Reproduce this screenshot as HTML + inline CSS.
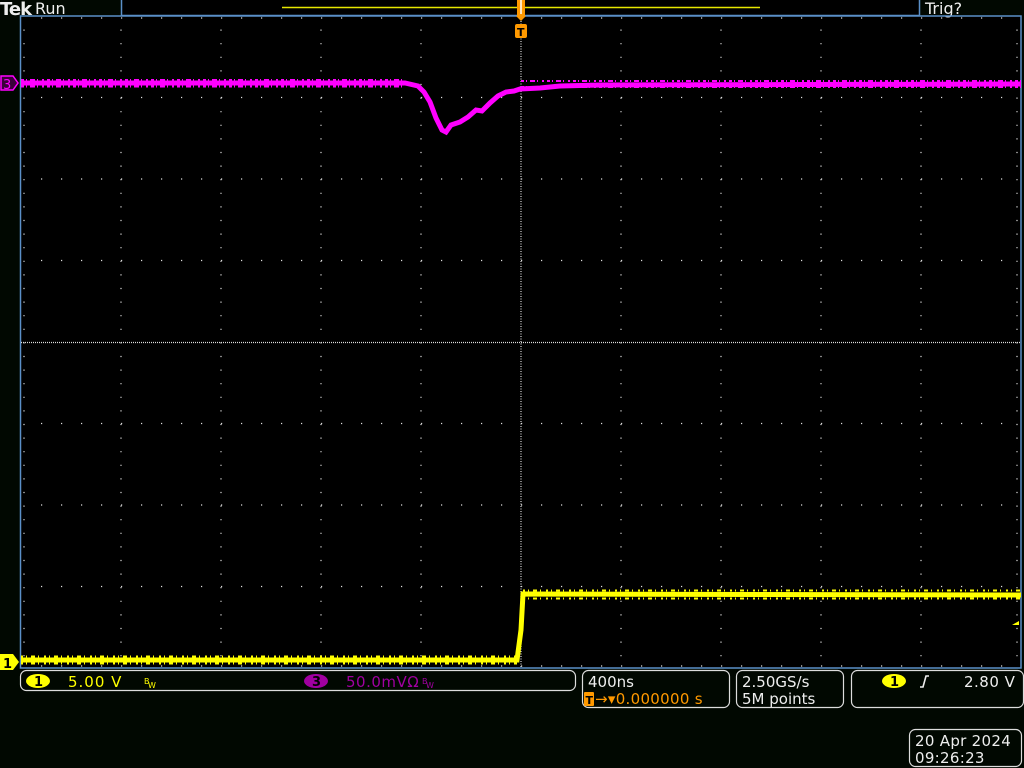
<!DOCTYPE html>
<html><head><meta charset="utf-8"><style>
html,body{margin:0;padding:0;background:#010801;width:1024px;height:768px;overflow:hidden}
svg{display:block}
text{font-family:"DejaVu Sans","Liberation Sans",sans-serif}
</style></head><body>
<svg width="1024" height="768" viewBox="0 0 1024 768" xmlns="http://www.w3.org/2000/svg">
<rect x="0" y="0" width="1024" height="768" fill="#010801"/>
<rect x="21" y="16" width="1000" height="652" fill="#000"/>
<rect x="121.5" y="-1" width="798" height="16.5" fill="#000" stroke="#5b8fc8" stroke-width="1.5"/>
<line x1="282" y1="7.5" x2="760" y2="7.5" stroke="#e6e600" stroke-width="1.5"/>
<text x="0" y="15" font-size="18" font-weight="bold" fill="#eee" font-family="Liberation Serif,serif" letter-spacing="-1">Tek</text>
<text x="35" y="14" font-size="16" fill="#eee">Run</text>
<text x="925" y="14" font-size="16" fill="#eee">Trig?</text>
<rect x="20.5" y="16" width="1000.5" height="652" fill="none" stroke="#5b8fc8" stroke-width="1.5"/>
<g stroke="#ddd" stroke-width="1.2" fill="none">
 <g stroke-dasharray="1.2 12.4">
  <line x1="121" y1="29.5" x2="121" y2="668"/><line x1="221" y1="29.5" x2="221" y2="668"/>
  <line x1="321" y1="29.5" x2="321" y2="668"/><line x1="421" y1="29.5" x2="421" y2="668"/>
  <line x1="621" y1="29.5" x2="621" y2="668"/><line x1="721" y1="29.5" x2="721" y2="668"/>
  <line x1="821" y1="29.5" x2="821" y2="668"/><line x1="921" y1="29.5" x2="921" y2="668"/>
 </g>
 <g stroke-dasharray="1.2 18.8">
  <line x1="41" y1="97.5" x2="1021" y2="97.5"/><line x1="41" y1="179" x2="1021" y2="179"/>
  <line x1="41" y1="260.5" x2="1021" y2="260.5"/><line x1="41" y1="423.5" x2="1021" y2="423.5"/>
  <line x1="41" y1="505" x2="1021" y2="505"/><line x1="41" y1="586.5" x2="1021" y2="586.5"/>
  <line x1="41" y1="18" x2="1021" y2="18"/><line x1="41" y1="666" x2="1021" y2="666"/>
 </g>
 <line x1="21" y1="342.5" x2="1021" y2="342.5" stroke-dasharray="1 1"/>
 <line x1="521" y1="16" x2="521" y2="668" stroke-dasharray="1 1.5"/>
 <g stroke-dasharray="1.2 12.4">
  <line x1="24" y1="29.5" x2="24" y2="668"/><line x1="1017" y1="29.5" x2="1017" y2="668"/>
 </g>
</g>
<!-- magenta trace -->
<path d="M21 83 L405 83 L418 86 L424 92 L430 102 L436 118 L442 130 L446 132 L451 125 L460 122 L468 117 L476 110 L482 111 L490 103 L498 96 L506 92 L514 91 L520 89 L540 88 L560 86 L600 85 L1021 84" fill="none" stroke="#ff00ff" stroke-width="5"/>
<path d="M21 80 h385 M521 81 h500 M21 86.5 h385 M521 87 h500" fill="none" stroke="#ff00ff" stroke-width="2" stroke-dasharray="3 2 1 3 5 2 1 4 2 3"/>
<!-- yellow trace -->
<path d="M21 660 L517 660 L521 630 L523 594 L1021 595" fill="none" stroke="#ffff00" stroke-width="5"/>
<path d="M21 656.5 h496 M21 663.5 h496 M523 590.5 h498 M523 598.5 h498" fill="none" stroke="#ffff00" stroke-width="2" stroke-dasharray="2 3 1 4 4 3 1 5"/>
<path d="M1 76 h12 l5 7 l-5 7 h-12 z" fill="#3a003a" stroke="#ff00ff" stroke-width="1.5"/>
<text x="3" y="89" font-size="13" fill="#ff00ff">3</text>
<path d="M0 654 h13 l6 8 l-6 8 h-13 z" fill="#ffff00"/>
<text x="3" y="668" font-size="13" font-weight="bold" fill="#000">1</text>
<path d="M1019 625 l-7 0 l7 -4 z" fill="#ffff00"/>
<rect x="517" y="0" width="8" height="16" fill="#ff9900"/><line x1="521" y1="0" x2="521" y2="14" stroke="#fff" stroke-width="1.5"/>
<path d="M516 16 h10 l-5 5 z" fill="#ff9900"/>
<rect x="515" y="24" width="12" height="14" rx="2" fill="#ff9900"/>
<text x="517" y="36" font-size="11" font-weight="bold" fill="#000">T</text>
<g fill="none" stroke="#ddd" stroke-width="1.2">
 <rect x="20.5" y="670.5" width="555" height="20" rx="6"/>
 <rect x="582.5" y="670.5" width="147" height="37" rx="6"/>
 <rect x="736.5" y="670.5" width="107" height="37" rx="6"/>
 <rect x="851.5" y="670.5" width="172" height="37" rx="6"/>
 <rect x="909.5" y="729.5" width="112" height="37" rx="6"/>
</g>
<ellipse cx="38" cy="681" rx="12" ry="7" fill="#ffff00"/>
<text x="34" y="686" font-size="13" font-weight="bold" fill="#000">1</text>
<text x="68" y="687" font-size="15" fill="#ffff00" letter-spacing="1">5.00 V</text>
<text x="144" y="684" font-size="8" fill="#ffff00">B</text><text x="148" y="688" font-size="8" fill="#ffff00">W</text>
<ellipse cx="316" cy="681" rx="12" ry="7" fill="#a000a0"/>
<text x="312" y="686" font-size="13" font-weight="bold" fill="#000">3</text>
<text x="346" y="687" font-size="15" fill="#a000a0" letter-spacing="0.5">50.0mVΩ</text>
<text x="422" y="684" font-size="8" fill="#a000a0">B</text><text x="426" y="688" font-size="8" fill="#a000a0">W</text>
<text x="588" y="687" font-size="15" fill="#eee">400ns</text>
<rect x="584" y="692" width="10" height="14" rx="1" fill="#ff9900"/>
<text x="585.5" y="704" font-size="11" font-weight="bold" fill="#000">T</text>
<text x="595" y="704" font-size="15" fill="#ff9900" letter-spacing="0.3">→▾0.000000 s</text>
<text x="742" y="687" font-size="15" fill="#eee">2.50GS/s</text>
<text x="742" y="704" font-size="15" fill="#eee">5M points</text>
<ellipse cx="894" cy="681" rx="12" ry="7" fill="#ffff00"/>
<text x="890" y="686" font-size="13" font-weight="bold" fill="#000">1</text>
<path d="M920 687 h3 l3 -11 h3" fill="none" stroke="#eee" stroke-width="1.6"/>
<text x="964" y="687" font-size="15" fill="#eee" letter-spacing="0.5">2.80 V</text>
<text x="915" y="746" font-size="15" fill="#eee" letter-spacing="0.3">20 Apr 2024</text>
<text x="915" y="763" font-size="15" fill="#eee" letter-spacing="0.3">09:26:23</text>
</svg>
</body></html>
